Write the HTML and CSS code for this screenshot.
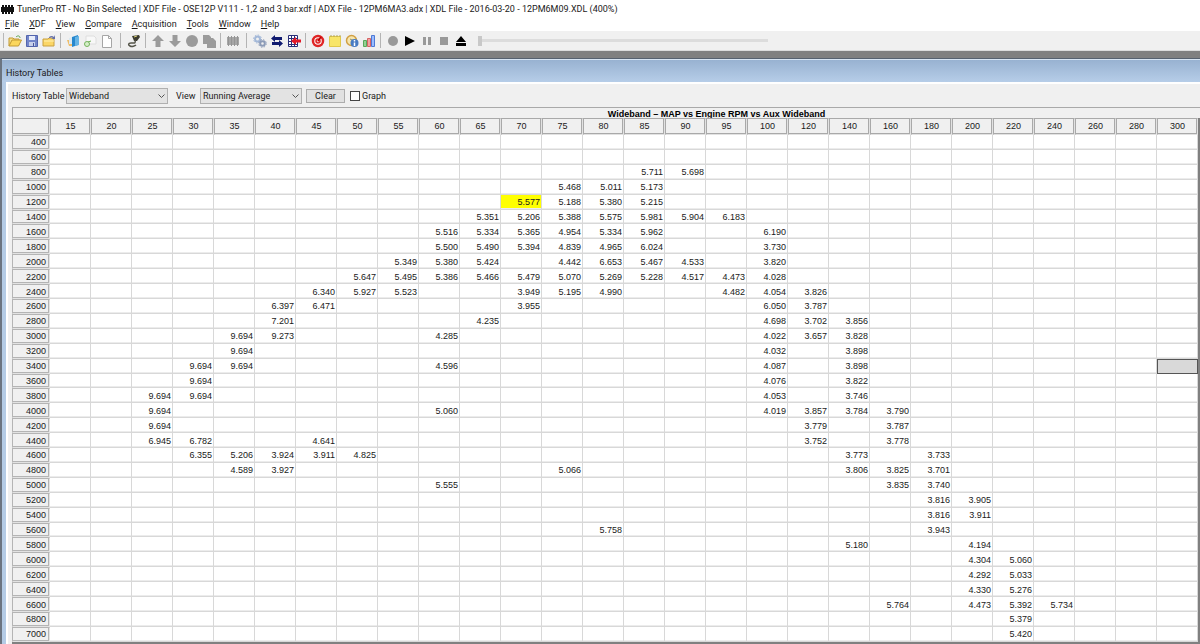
FILE: index.html
```html
<!DOCTYPE html>
<html lang="en">
<head>
<meta charset="utf-8">
<title>TunerPro RT</title>
<link rel="stylesheet" href="styles.css">
</head>
<body>
<header class="titlebar">
  <svg class="app-icon" viewBox="0 0 13 9" aria-hidden="true"><path d="M0 2h13v5H0zM1 0h2v9H1zM4 0h2v9H4zM7 0h2v9H7zM10 0h2v9h-2z" fill="#111"/></svg>
  <span>TunerPro RT - No Bin Selected | XDF File - OSE12P V111 - 1,2 and 3 bar.xdf | ADX File - 12PM6MA3.adx | XDL File - 2016-03-20 - 12PM6M09.XDL (400%)</span>
</header>
<nav class="menu">
  <button><u>F</u>ile</button><button><u>X</u>DF</button><button><u>V</u>iew</button><button><u>C</u>ompare</button><button><u>A</u>cquisition</button><button><u>T</u>ools</button><button><u>W</u>indow</button><button><u>H</u>elp</button>
</nav>
<div class="toolbar">
  <span class="grip"></span>
  <button class="tool" aria-label="Open"><svg viewBox="0 0 14 14"><path d="M1 12V4h4l1 1h5v2" fill="#f7df86" stroke="#c29a35"/><path d="M1 12l3-6h9.5l-3 6z" fill="#fbd75d" stroke="#c29a35"/><path d="M8 3c2-2 4-1 4 1" fill="none" stroke="#58a24c"/></svg></button>
  <button class="tool" aria-label="Save"><svg viewBox="0 0 14 14"><path d="M1.500 1.500h11v11h-11z" fill="#7285c9" stroke="#5364ad"/><path d="M4 2h6v4H4z" fill="#e8edfb"/><path d="M4 8h6v4H4z" fill="#c8d0ea"/><path d="M8 9h1v3H8z" fill="#46549a"/></svg></button>
  <button class="tool" aria-label="Close"><svg viewBox="0 0 14 14"><path d="M1 12V5h5l1-1h5v8z" fill="#fbd666" stroke="#c9a040"/><path d="M2 7h10" stroke="#fff0b0"/><path d="M7 4c0-2 3-3 5-1l1-2v4H9l2-1c-1-1-2-1-3 0z" fill="#6670a8"/></svg></button>
  <span class="sep"></span>
  <button class="tool" aria-label="Load definition"><svg viewBox="0 0 14 14"><path d="M6 3l6-2v10l-6 2z" fill="#2787cd"/><path d="M9 3l4-1v9l-4 1z" fill="#65b4e5"/><path d="M1 6h5v6H3z" fill="#f0bd68"/><path d="M3 4l3-1v7H3z" fill="#dbe9f2"/></svg></button>
  <button class="tool" aria-label="Edit definition"><svg viewBox="0 0 14 14"><path d="M3 2h8l2 2v6H3z" fill="#f8f8f8" stroke="#dedede"/><circle cx="4" cy="10" r="2.500" fill="#d6efc9" stroke="#75b45d"/><path d="M5 8l3-1" stroke="#75b45d"/></svg></button>
  <button class="tool" aria-label="New definition"><svg viewBox="0 0 14 14"><path d="M2.500 1.500h6l3 3v9h-9z" fill="#fff" stroke="#a6a6a6"/><path d="M8.500 1.500v3h3" fill="none" stroke="#a6a6a6"/></svg></button>
  <span class="sep wide"></span>
  <button class="tool" aria-label="Connect"><svg viewBox="0 0 14 14"><path d="M5 2l7-1 1 2-3 4H7z" fill="#3b3b30"/><path d="M8 6c1 4-1 3-4 3s-3 2-1 3 5 0 6-1" fill="none" stroke="#55554a" stroke-width="1.500"/><path d="M7 3l3-1" stroke="#d9cf73"/></svg></button>
  <span class="sep"></span>
  <button class="tool" aria-label="Upload"><svg viewBox="0 0 14 14"><path d="M7 1l6 6H9.500v6h-5V7H1z" fill="#9b9b9b"/></svg></button>
  <button class="tool" aria-label="Download"><svg viewBox="0 0 14 14"><path d="M7 13l6-6H9.500V1h-5v6H1z" fill="#9b9b9b"/></svg></button>
  <button class="tool" aria-label="Verify"><svg viewBox="0 0 14 14"><circle cx="7" cy="7" r="6" fill="#9b9b9b"/></svg></button>
  <button class="tool" aria-label="Copy"><svg viewBox="0 0 14 14"><path d="M1 1h6l2 2v7H1zM5 4h6l3 3v7H5z" fill="#9b9b9b"/></svg></button>
  <span class="sep"></span>
  <button class="tool" aria-label="Chip"><svg viewBox="0 0 14 14"><path d="M1 3h12v8H1z" fill="#a6a6a6"/><path d="M2 2h1v10H2zM5 2h1v10H5zM8 2h1v10H8zM11 2h1v10h-1z" fill="#949494"/></svg></button>
  <span class="sep wide"></span>
  <button class="tool" aria-label="Settings"><svg viewBox="0 0 14 14" fill="none"><circle cx="4.500" cy="5" r="2.500" stroke="#a3b8d8" stroke-width="2"/><circle cx="4.500" cy="5" r="4" stroke="#a3b8d8" stroke-dasharray="1.500 1.600"/><circle cx="9.500" cy="9.500" r="2.300" stroke="#8d9cb8" stroke-width="2"/><circle cx="9.500" cy="9.500" r="3.800" stroke="#8d9cb8" stroke-dasharray="1.500 1.500"/></svg></button>
  <button class="tool" aria-label="Swap"><svg viewBox="0 0 14 14"><path d="M1 4.500L5 1v2h7v3H5v2zM13 9.500L9 6v2H2v3h7v2z" fill="#111b70"/></svg></button>
  <button class="tool" aria-label="Compare table"><svg viewBox="0 0 14 14"><path d="M1.500 1.500h9v11h-9zM1 4.500h10M1 7.500h10M1 10.500h10M4.500 1v11M7.500 1v11" fill="#fff" stroke="#282e79"/><path d="M4 7l5-4v2.500h5v3H9V11z" fill="#e31927"/></svg></button>
  <span class="sep"></span>
  <button class="tool" aria-label="Dashboard"><svg viewBox="0 0 14 14"><circle cx="7" cy="7" r="5" fill="#fff" stroke="#df2525" stroke-width="2.500"/><circle cx="7" cy="7" r="2" fill="#f6baba" stroke="#df2525" stroke-width="1.500"/><path d="M7 7l3-4" stroke="#b00" stroke-width="1.500"/></svg></button>
  <button class="tool" aria-label="Notes"><svg viewBox="0 0 14 14"><path d="M1.500 2.500h11v10h-11z" fill="#f8e568" stroke="#e0c84b"/><path d="M3 1v2M6 1v2M9 1v2M12 1v2" stroke="#b3a65b"/></svg></button>
  <button class="tool" aria-label="Monitor"><svg viewBox="0 0 14 14"><circle cx="6.500" cy="6.500" r="5" fill="#f6e6ae" stroke="#d1a044" stroke-width="1.500"/><path d="M5 5l4 2" stroke="#8f8f70"/><circle cx="9.500" cy="9" r="4" fill="#477bc3"/><path d="M9.500 8.500V12M9.500 6v1.500" stroke="#fff" stroke-width="1.500"/></svg></button>
  <button class="tool" aria-label="History"><svg viewBox="0 0 14 14"><path d="M1.500 6.500h3v6h-3z" fill="#93d393" stroke="#5aa75c"/><path d="M5.500 4.500h3v8h-3z" fill="#f3a1a1" stroke="#d56363"/><path d="M9.500 1.500h3v11h-3z" fill="#99bcff" stroke="#4e78d4"/></svg></button>
  <span class="sep"></span>
  <button class="tool" aria-label="Record"><svg viewBox="0 0 14 14"><circle cx="7" cy="7" r="5" fill="#999"/></svg></button>
  <button class="tool" aria-label="Play"><svg viewBox="0 0 14 14"><path d="M2 2l10 5-10 5z" fill="#000"/></svg></button>
  <button class="tool" aria-label="Pause"><svg viewBox="0 0 14 14"><path d="M3 3h3v8H3zM8 3h3v8H8z" fill="#999"/></svg></button>
  <button class="tool" aria-label="Stop"><svg viewBox="0 0 14 14"><path d="M3 3h8v8H3z" fill="#999"/></svg></button>
  <button class="tool" aria-label="Eject"><svg viewBox="0 0 14 14"><path d="M7 2l5 6H2zM2 9h10v3H2z" fill="#000"/></svg></button>
  <input class="seek" type="range" min="0" max="100" value="0" aria-label="Playback position">
</div>
<main class="window">
  <h1 class="window-title">History Tables</h1>
  <div class="window-body">
    <form class="options">
      <label class="table-label" for="table-select">History Table</label>
      <span class="select"><select id="table-select"><option>Wideband</option></select><svg viewBox="0 0 7 5" aria-hidden="true"><path d="M.5.5l3 3 3-3" fill="none" stroke="#555"/></svg></span>
      <label class="view-label" for="view-select">View</label>
      <span class="select"><select id="view-select"><option>Running Average</option></select><svg viewBox="0 0 7 5" aria-hidden="true"><path d="M.5.5l3 3 3-3" fill="none" stroke="#555"/></svg></span>
      <button class="clear" type="button">Clear</button>
      <label class="graph"><input type="checkbox">Graph</label>
    </form>
    <h2 class="table-title">Wideband – MAP vs Engine RPM vs Aux Wideband</h2>
    <div class="sheet">
      <table class="history">
        <thead><tr id="columns"><th class="corner"></th></tr></thead>
        <tbody id="rows"></tbody>
      </table>
    </div>
  </div>
</main>
<script src="table.js"></script>
</body>
</html>
```

FILE: styles.css
```css
* { box-sizing: border-box; }

body {
  margin: 0;
  min-height: 100vh;
  display: flex;
  flex-direction: column;
  background: #808080;
  color: #1a1a1a;
  font-family: Roboto, "Noto Sans", sans-serif;
  font-size: 9px;
}

button, select, input { font: inherit; color: inherit; margin: 0; }
h1, h2 { margin: 0; font-weight: 400; }

.titlebar {
  display: flex;
  align-items: center;
  gap: 3px;
  height: 18px;
  padding-left: 1px;
  background: #fff;
  white-space: nowrap;
  overflow: hidden;
}
.app-icon { width: 13px; height: 9px; flex: none; }

.menu {
  display: flex;
  gap: 10px;
  height: 13px;
  padding-left: 5px;
  background: #fff;
}
.menu button {
  padding: 0;
  border: 0;
  background: none;
  line-height: 13px;
}

.toolbar {
  display: flex;
  align-items: center;
  height: 20px;
  background: #f0f0f0;
  border-bottom: 1px solid #dcdcdc;
}
.grip { width: 4px; height: 15px; border-right: 1px solid #b8b8b8; margin-right: 2px; }
.tool {
  display: flex;
  align-items: center;
  justify-content: center;
  width: 17px;
  height: 17px;
  padding: 0;
  border: 0;
  background: none;
}
.tool svg { width: 14px; height: 14px; }
.sep { width: 7px; height: 15px; display: flex; justify-content: center; }
.sep::before { content: ""; width: 1px; background: #b4b4b4; }
.sep.wide { width: 10px; }

.seek {
  appearance: none;
  width: 290px;
  height: 12px;
  margin-left: 9px;
  background: linear-gradient(#dcdcdc, #dcdcdc) center / 100% 3px no-repeat;
}
.seek::-webkit-slider-thumb { appearance: none; width: 4px; height: 10px; background: #c8c8c8; }

.window {
  flex: 1;
  display: flex;
  flex-direction: column;
  margin-top: 7px;
  border-top: 1px solid #56616f;
  border-left: 2px solid #6b7480;
  background: #b4cbe5;
}
.window-title {
  height: 23px;
  padding-left: 4px;
  border-top: 1px solid #d6e3f1;
  background: linear-gradient(#98b2d1, #b6cde8);
  font-size: 9px;
  line-height: 26px;
}
.window-body {
  flex: 1;
  display: flex;
  flex-direction: column;
  margin-left: 4px;
  border-top: 2px solid #fff;
  border-left: 2px solid #fff;
  background: #f0f0f0;
  padding-left: 4px;
}

.options {
  display: flex;
  align-items: center;
  height: 23px;
}
.table-label { width: 54px; white-space: nowrap; }
.view-label { width: 32px; padding-left: 8px; }
.select { position: relative; width: 102px; height: 16px; }
.select select {
  appearance: none;
  display: block;
  width: 100%;
  height: 100%;
  padding: 0 2px;
  border: 1px solid #b0b0b0;
  border-radius: 0;
  background: #e3e3e3;
}
.select svg { position: absolute; right: 3px; top: 6px; width: 7px; height: 5px; }
.clear {
  width: 39px;
  height: 14px;
  margin: 0 5px 0 4px;
  padding: 0;
  border: 1px solid #adadad;
  background: #e1e1e1;
  line-height: 12px;
}
.graph { display: flex; align-items: center; gap: 2px; }
.graph input {
  appearance: none;
  width: 10px;
  height: 10px;
  border: 1px solid #444;
  background: #fff;
}

.table-title {
  height: 11px;
  padding-left: 220px;
  border-top: 1px solid #a9a9a9;
  border-left: 1px solid #a9a9a9;
  overflow: hidden;
  font: bold 9px/13px "Liberation Sans", Arial, sans-serif;
  color: #000;
  text-align: center;
}
.sheet {
  flex: 1;
  display: flex;
  padding: 0 2px 2px 0;
  background: #808080;
}

.history {
  width: 100%;
  table-layout: fixed;
  border-collapse: separate;
  border-spacing: 0;
  background: #fff;
  font: 9px/11px "Liberation Sans", Arial, sans-serif;
}
.history th, .history td { height: 14px; padding: 0; font-weight: 400; }
.history thead th {
  height: 17px;
  border: 1px solid #a9a9a9;
  border-right-color: #e2e2e2;
  border-bottom-color: #e2e2e2;
  box-shadow: inset -1px -1px #a9a9a9;
  background: #f0f0f0;
}
.history .corner { width: 38px; }
.history tbody th {
  padding: 1px 3px 0 0;
  border: 1px solid #b4b4b4;
  border-right-color: #e2e2e2;
  border-bottom-color: #e2e2e2;
  box-shadow: inset -1px -1px #b4b4b4;
  background: #f0f0f0;
  text-align: right;
}
.history td {
  padding: 2px 1px 0 0;
  border-right: 1px solid #d8d8d8;
  border-bottom: 1px solid #d8d8d8;
  box-shadow: inset 0 -1px #ececec;
  text-align: right;
}
.history td.current { background: #ff0; }
.history td.selected { background: #d9d9d9; border: 1px solid #555; box-shadow: none; }
```

FILE: table.js
```js
const columns = [15, 20, 25, 30, 35, 40, 45, 50, 55, 60, 65, 70, 75, 80, 85, 90, 95,
  100, 120, 140, 160, 180, 200, 220, 240, 260, 280, 300];

// Engine RPM -> { MAP: average }
const readings = {
  800: { 85: "5.711", 90: "5.698" },
  1000: { 75: "5.468", 80: "5.011", 85: "5.173" },
  1200: { 70: "5.577", 75: "5.188", 80: "5.380", 85: "5.215" },
  1400: { 65: "5.351", 70: "5.206", 75: "5.388", 80: "5.575", 85: "5.981", 90: "5.904", 95: "6.183" },
  1600: { 60: "5.516", 65: "5.334", 70: "5.365", 75: "4.954", 80: "5.334", 85: "5.962", 100: "6.190" },
  1800: { 60: "5.500", 65: "5.490", 70: "5.394", 75: "4.839", 80: "4.965", 85: "6.024", 100: "3.730" },
  2000: { 55: "5.349", 60: "5.380", 65: "5.424", 75: "4.442", 80: "6.653", 85: "5.467", 90: "4.533", 100: "3.820" },
  2200: { 50: "5.647", 55: "5.495", 60: "5.386", 65: "5.466", 70: "5.479", 75: "5.070", 80: "5.269", 85: "5.228", 90: "4.517", 95: "4.473", 100: "4.028" },
  2400: { 45: "6.340", 50: "5.927", 55: "5.523", 70: "3.949", 75: "5.195", 80: "4.990", 95: "4.482", 100: "4.054", 120: "3.826" },
  2600: { 40: "6.397", 45: "6.471", 70: "3.955", 100: "6.050", 120: "3.787" },
  2800: { 40: "7.201", 65: "4.235", 100: "4.698", 120: "3.702", 140: "3.856" },
  3000: { 35: "9.694", 40: "9.273", 60: "4.285", 100: "4.022", 120: "3.657", 140: "3.828" },
  3200: { 35: "9.694", 100: "4.032", 140: "3.898" },
  3400: { 30: "9.694", 35: "9.694", 60: "4.596", 100: "4.087", 140: "3.898" },
  3600: { 30: "9.694", 100: "4.076", 140: "3.822" },
  3800: { 25: "9.694", 30: "9.694", 100: "4.053", 140: "3.746" },
  4000: { 25: "9.694", 60: "5.060", 100: "4.019", 120: "3.857", 140: "3.784", 160: "3.790" },
  4200: { 25: "9.694", 120: "3.779", 160: "3.787" },
  4400: { 25: "6.945", 30: "6.782", 45: "4.641", 120: "3.752", 160: "3.778" },
  4600: { 30: "6.355", 35: "5.206", 40: "3.924", 45: "3.911", 50: "4.825", 140: "3.773", 180: "3.733" },
  4800: { 35: "4.589", 40: "3.927", 75: "5.066", 140: "3.806", 160: "3.825", 180: "3.701" },
  5000: { 60: "5.555", 160: "3.835", 180: "3.740" },
  5200: { 180: "3.816", 200: "3.905" },
  5400: { 180: "3.816", 200: "3.911" },
  5600: { 80: "5.758", 180: "3.943" },
  5800: { 140: "5.180", 200: "4.194" },
  6000: { 200: "4.304", 220: "5.060" },
  6200: { 200: "4.292", 220: "5.033" },
  6400: { 200: "4.330", 220: "5.276" },
  6600: { 160: "5.764", 200: "4.473", 220: "5.392", 240: "5.734" },
  6800: { 220: "5.379" },
  7000: { 220: "5.420" }
};

const header = document.getElementById("columns");
for (const map of columns) {
  const th = document.createElement("th");
  th.scope = "col";
  th.textContent = map;
  header.append(th);
}

const body = document.getElementById("rows");
for (let rpm = 400; rpm <= 7000; rpm += 200) {
  const row = body.insertRow();
  const th = document.createElement("th");
  th.scope = "row";
  th.textContent = rpm;
  row.append(th);
  for (const map of columns) {
    const cell = row.insertCell();
    cell.textContent = (readings[rpm] || {})[map] || "";
    if (rpm === 1200 && map === 70) cell.className = "current";
    if (rpm === 3400 && map === 300) cell.className = "selected";
  }
}
```
